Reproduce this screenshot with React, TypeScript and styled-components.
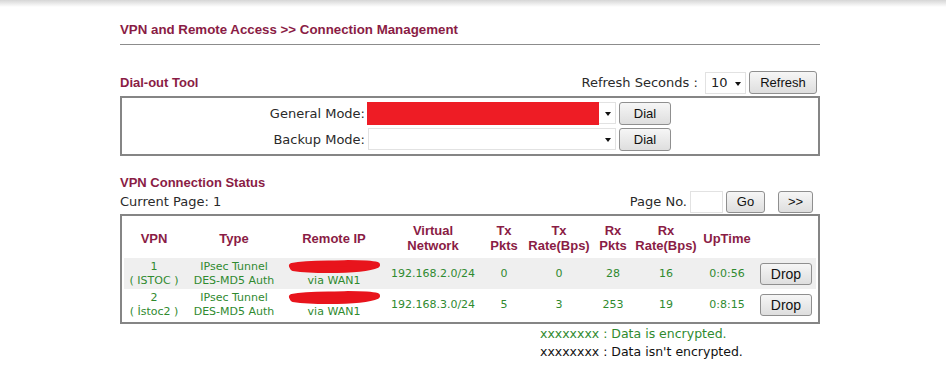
import styled, { createGlobalStyle } from "styled-components";

const GlobalStyle = createGlobalStyle`
  html, body {
    margin: 0;
    padding: 0;
    background: #ffffff;
  }
  body {
    font-family: "DejaVu Sans", Verdana, sans-serif;
    font-size: 13px;
    color: #222;
  }
`;

const maroon = "#8a1c45";
const green = "#2f8a2f";

const TopShade = styled.div`
  height: 7px;
  background: linear-gradient(#d6d6d6, #ffffff);
`;

const Page = styled.main`
  width: 700px;
  margin-left: 120px;
  display: flex;
  flex-direction: column;
`;

const Title = styled.h1`
  margin: 15px 0 0;
  padding-bottom: 7px;
  border-bottom: 1px solid #8c8c8c;
  font: bold 13.3px "Liberation Sans", Arial, sans-serif;
  color: ${maroon};
  line-height: 15px;
`;

const SectionHead = styled.div<{ top: number }>`
  margin-top: ${({ top }) => top}px;
  display: flex;
  align-items: center;
  justify-content: space-between;
`;

const SectionTitle = styled.h2`
  margin: 0;
  font: bold 13px "Liberation Sans", Arial, sans-serif;
  color: ${maroon};
`;

const Controls = styled.div<{ end?: number }>`
  display: flex;
  align-items: center;
  gap: 3px;
  margin-right: ${({ end }) => end ?? 0}px;
`;

const Label = styled.span`
  font-size: 13px;
  color: #2a2a2a;
  white-space: nowrap;
`;

const Button = styled.button<{ w: number; h?: number; big?: boolean }>`
  width: ${({ w }) => w}px;
  height: ${({ h }) => h ?? 22}px;
  padding: 0;
  border: 1px solid #8f8f8f;
  border-radius: 3px;
  background: linear-gradient(#f6f6f6, #dedede);
  font: ${({ big }) => (big ? 14 : 13)}px "Liberation Sans", Arial, sans-serif;
  color: #111;
`;

const Select = styled.div<{ w: number; fill?: string }>`
  position: relative;
  width: ${({ w }) => w}px;
  height: 22px;
  box-sizing: border-box;
  border: 1px solid #e2e2e2;
  background: #fff;
  font-size: 13px;
  padding-left: 5px;
  display: flex;
  align-items: center;

  &::before {
    content: "";
    display: ${({ fill }) => (fill ? "block" : "none")};
    position: absolute;
    left: -2px;
    top: -1px;
    bottom: -2px;
    right: 16px;
    background: ${({ fill }) => fill ?? "transparent"};
  }

  &::after {
    content: "";
    position: absolute;
    right: 4px;
    top: 9px;
    border-left: 3.5px solid transparent;
    border-right: 3.5px solid transparent;
    border-top: 4px solid #111;
  }
`;

const DialBox = styled.div`
  margin-top: 2px;
  border: 2px solid #858585;
  height: 56px;
  box-sizing: content-box;
  display: grid;
  grid-template-columns: 243px auto auto 1fr;
  align-content: center;
  row-gap: 3px;
  column-gap: 3px;
`;

const ModeLabel = styled(Label)`
  text-align: right;
  align-self: center;
`;

const Pager = styled(SectionHead)`
  height: 23px;
`;

const PageInput = styled.div`
  width: 33px;
  height: 22px;
  box-sizing: border-box;
  border: 1px solid #e2e2e2;
`;

const NextButton = styled(Button)`
  margin-left: 10px;
`;

const Table = styled.table`
  margin-top: 1px;
  width: 100%;
  box-sizing: border-box;
  border: 2px solid #858585;
  border-spacing: 0;
  padding: 2px;
  table-layout: fixed;
`;

const Th = styled.th<{ w?: number }>`
  width: ${({ w }) => (w ? `${w}px` : "auto")};
  height: 40px;
  padding: 0;
  font: bold 13px/15px "Liberation Sans", Arial, sans-serif;
  color: ${maroon};
  text-align: center;
`;

const Row = styled.tr<{ shade: boolean }>`
  background: ${({ shade }) => (shade ? "#efefef" : "#ffffff")};
`;

const Td = styled.td`
  height: 31px;
  padding: 0;
  font-size: 11px;
  line-height: 14px;
  color: ${green};
  text-align: center;
`;

const RemoteCell = styled(Td)`
  position: relative;
`;

const Scribble = styled.svg`
  position: absolute;
  left: 4px;
  top: 1px;
`;

const Notes = styled.div`
  margin: 1px 0 0 420px;
  display: flex;
  flex-direction: column;
  font-size: 12.5px;
  line-height: 18px;
`;

const Note = styled.span<{ color: string }>`
  color: ${({ color }) => color};
`;

const rows = [
  { id: "1", name: "( ISTOC )", net: "192.168.2.0/24", txp: "0", txr: "0", rxp: "28", rxr: "16", up: "0:0:56" },
  { id: "2", name: "( İstoc2 )", net: "192.168.3.0/24", txp: "5", txr: "3", rxp: "253", rxr: "19", up: "0:8:15" },
];

export default function App() {
  return (
    <>
      <GlobalStyle />
      <TopShade />
      <Page>
        <Title>VPN and Remote Access &gt;&gt; Connection Management</Title>

        <SectionHead top={26}>
          <SectionTitle>Dial-out Tool</SectionTitle>
          <Controls end={3}>
            <Label>Refresh Seconds :&nbsp;</Label>
            <Select w={41}>10</Select>
            <Button w={68} h={23}>Refresh</Button>
          </Controls>
        </SectionHead>

        <DialBox>
          <ModeLabel>General Mode:</ModeLabel>
          <Select w={248} fill="#ee1c25" />
          <Button w={52} h={23}>Dial</Button>
          <span />
          <ModeLabel>Backup Mode:</ModeLabel>
          <Select w={248} />
          <Button w={52} h={23}>Dial</Button>
          <span />
        </DialBox>

        <SectionHead top={19}>
          <SectionTitle>VPN Connection Status</SectionTitle>
        </SectionHead>
        <Pager top={0}>
          <Label>Current Page: 1</Label>
          <Controls end={7}>
            <Label>Page No.</Label>
            <PageInput />
            <Button w={39}>Go</Button>
            <NextButton w={35}>&gt;&gt;</NextButton>
          </Controls>
        </Pager>

        <Table>
          <thead>
            <tr>
              <Th w={60}>VPN</Th>
              <Th w={100}>Type</Th>
              <Th w={100}>Remote IP</Th>
              <Th w={98}>Virtual<br />Network</Th>
              <Th w={44}>Tx<br />Pkts</Th>
              <Th w={66}>Tx<br />Rate(Bps)</Th>
              <Th w={42}>Rx<br />Pkts</Th>
              <Th w={64}>Rx<br />Rate(Bps)</Th>
              <Th w={58}>UpTime</Th>
              <Th />
            </tr>
          </thead>
          <tbody>
            {rows.map((r, i) => (
              <Row key={r.id} shade={i === 0}>
                <Td>{r.id}<br />{r.name}</Td>
                <Td>IPsec Tunnel<br />DES-MD5 Auth</Td>
                <RemoteCell>
                  <Scribble width="94" height="16" viewBox="0 0 94 16">
                    <path
                      d="M4 7 C20 4 40 5 60 4 C72 4 82 4 89 6 C80 10 60 11 40 11 C25 11 12 10 5 9 Z"
                      fill="#e8141c"
                      stroke="#e8141c"
                      strokeWidth="6"
                      strokeLinejoin="round"
                    />
                  </Scribble>
                  <br />via WAN1
                </RemoteCell>
                <Td>{r.net}</Td>
                <Td>{r.txp}</Td>
                <Td>{r.txr}</Td>
                <Td>{r.rxp}</Td>
                <Td>{r.rxr}</Td>
                <Td>{r.up}</Td>
                <Td>
                  <Button w={52} h={22} big>Drop</Button>
                </Td>
              </Row>
            ))}
          </tbody>
        </Table>

        <Notes>
          <Note color={green}>xxxxxxxx : Data is encrypted.</Note>
          <Note color="#111">xxxxxxxx : Data isn't encrypted.</Note>
        </Notes>
      </Page>
    </>
  );
}
